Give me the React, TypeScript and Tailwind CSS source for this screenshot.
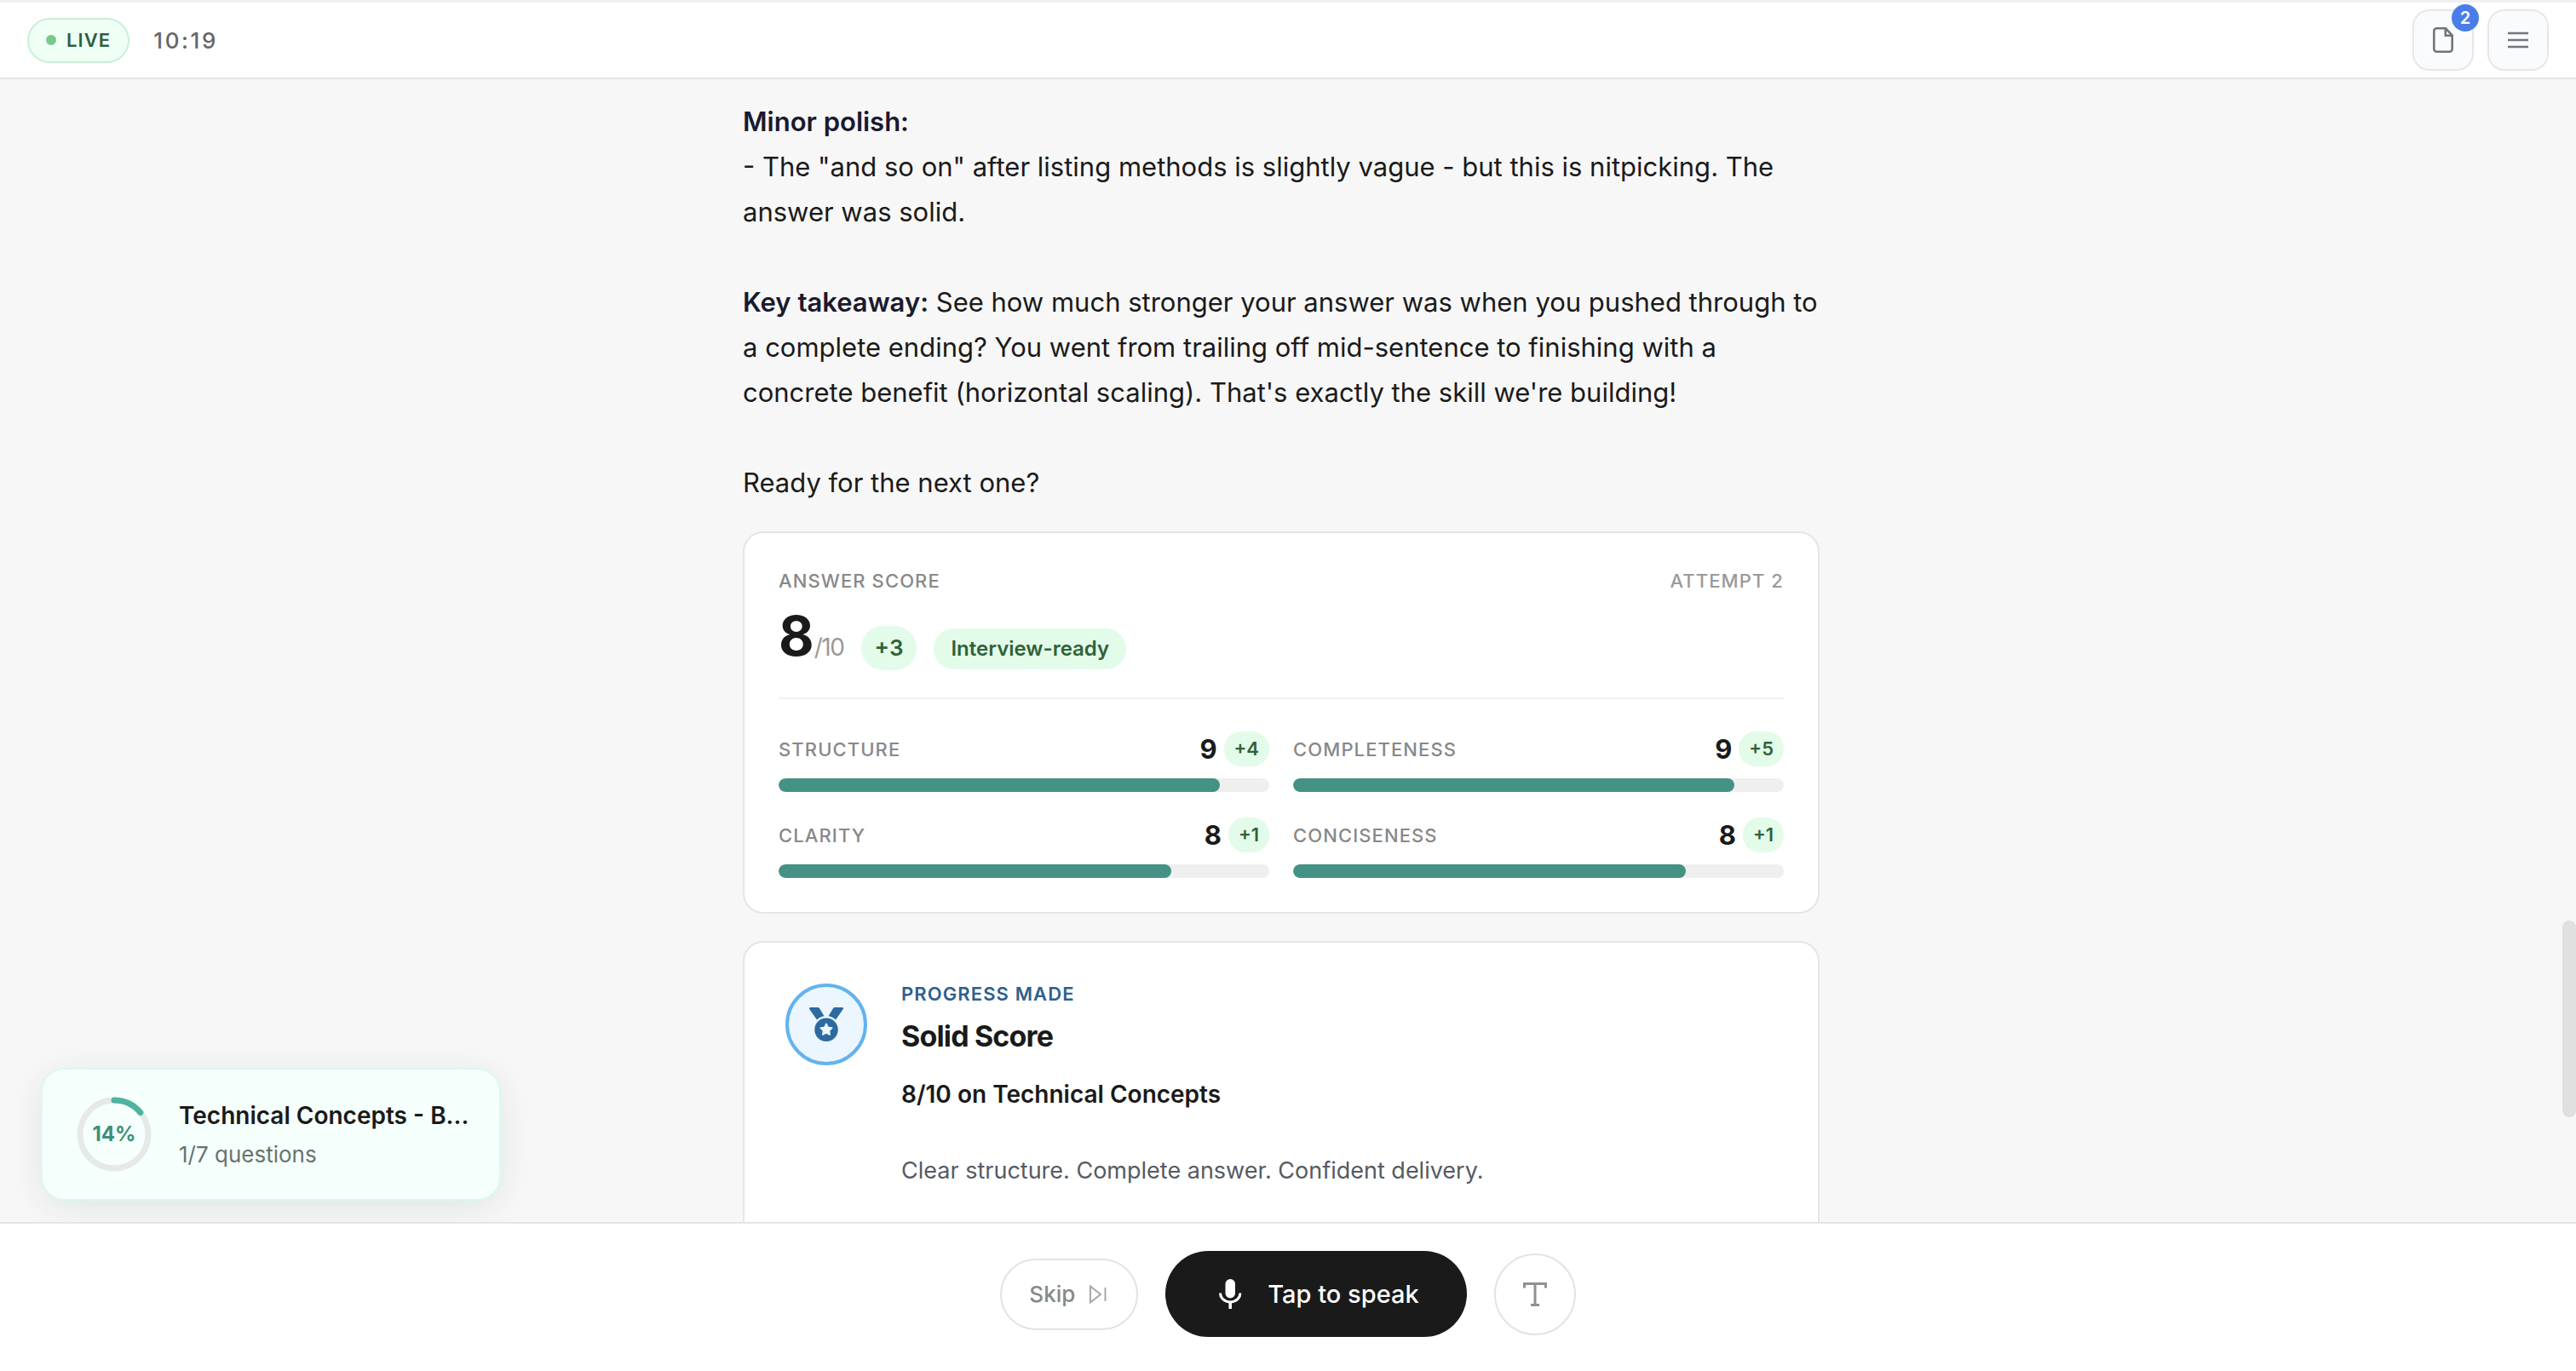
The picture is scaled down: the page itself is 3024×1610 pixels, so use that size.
import { FaMedal } from 'react-icons/fa';

interface Metric {
  label: string;
  score: number;
  delta: number;
}

const metrics: Metric[] = [
  { label: 'Structure', score: 9, delta: 4 },
  { label: 'Completeness', score: 9, delta: 5 },
  { label: 'Clarity', score: 8, delta: 1 },
  { label: 'Conciseness', score: 8, delta: 1 },
];

const FileIcon = () => (
  <svg width="24" height="30" viewBox="0 0 24 30" fill="none" stroke="currentColor" strokeWidth="2.6" aria-hidden="true">
    <path d="M4.500 1.300H15L22.700 9.500V25.500a3.200 3.200 0 0 1-3.200 3.200h-15a3.200 3.200 0 0 1-3.200-3.200v-21a3.200 3.200 0 0 1 3.200-3.200z" />
    <path d="M14.800 1.300v8.400h7.900" />
  </svg>
);

const MenuIcon = () => (
  <svg width="24" height="20" viewBox="0 0 24 20" stroke="currentColor" strokeWidth="2.6" aria-hidden="true">
    <path d="M0 2h24M0 10h24M0 18h24" />
  </svg>
);

const SkipIcon = () => (
  <svg width="24" height="24" viewBox="0 0 24 24" fill="none" stroke="#a8a8a8" strokeWidth="2" aria-hidden="true">
    <path d="M2 2.500 14 12 2 21.500z" />
    <path d="M19.500 4v16" />
  </svg>
);

const MicIcon = () => (
  <svg width="40" height="40" viewBox="0 0 40 40" fill="none" aria-hidden="true">
    <rect x="14.5" y="2" width="11.5" height="22.500" rx="5.750" fill="currentColor" />
    <path d="M8.500 18.500c0 5.800 5 10.500 11.700 10.500s11.700-4.700 11.700-10.500" stroke="currentColor" strokeWidth="3" />
    <path d="M20.200 29v8" stroke="currentColor" strokeWidth="3.500" />
  </svg>
);

const TextIcon = () => (
  <svg width="28" height="28" viewBox="0 0 28 28" fill="none" stroke="currentColor" strokeWidth="3" aria-hidden="true">
    <path d="M1.500 6.500v-5h25v5M14 1.500v25M9 26.500h10" />
  </svg>
);

const Header = () => (
  <header className="flex items-center justify-between border-t-[3px] border-b-2 border-t-[#f0f0f0] border-b-[#e5e5e5] bg-white px-8 py-2">
    <div className="flex items-center gap-7">
      <span className="flex items-center gap-3 rounded-full border-2 border-[#c6f0d6] bg-[#f0fff5] px-5 py-2 text-[22px] leading-[33px] font-semibold tracking-wider text-[#2b6040]">
        <span className="size-3 rounded-full bg-[#7bc88b]" />
        LIVE
      </span>
      <time className="text-[26px] leading-[39px] font-medium tracking-widest text-[#666666]">10:19</time>
    </div>
    <div className="flex gap-4 text-[#71757c]">
      <button type="button" aria-label="Documents" className="relative flex size-[72px] items-center justify-center rounded-[20px] border-2 border-[#e5e7eb] bg-[#fafbfd]">
        <FileIcon />
        <span className="absolute -top-2 -right-2 flex size-8 items-center justify-center rounded-full bg-[#4a7de9] text-[20px] leading-none font-semibold text-white">
          2
        </span>
      </button>
      <button type="button" aria-label="Menu" className="flex size-[72px] items-center justify-center rounded-[20px] border-2 border-[#e5e7eb] bg-[#fafbfd]">
        <MenuIcon />
      </button>
    </div>
  </header>
);

const Feedback = () => (
  <div className="text-[31px] leading-[53px] text-[#1a1a1a]">
    <p>
      <strong className="font-semibold text-[#1a1a2e]">Minor polish:</strong>
      <br />- The "and so on" after listing methods is slightly vague - but this is nitpicking. The answer was solid.
    </p>
    <p className="mt-[53px]">
      <strong className="font-semibold text-[#1a1a2e]">Key takeaway:</strong> See how much stronger your answer was when you
      pushed through to a complete ending? You went from trailing off mid-sentence to finishing with a concrete benefit
      (horizontal scaling). That's exactly the skill we're building!
    </p>
    <p className="mt-[53px]">Ready for the next one?</p>
  </div>
);

const MetricItem = ({ label, score, delta }: Metric) => (
  <div>
    <div className="flex h-[41px] items-center justify-between">
      <span className="text-[22px] leading-8 font-medium tracking-wider text-[#888888] uppercase">{label}</span>
      <span className="flex items-center gap-2">
        <span className="text-[31px] leading-8 font-bold text-[#1a1a1a]">{score}</span>
        <span className="rounded-[20px] bg-[#e3fbe9] px-3 text-[22px] leading-[41px] font-semibold text-[#2f6239]">+{delta}</span>
      </span>
    </div>
    <div className="mt-[14px] h-4 overflow-hidden rounded-lg bg-[#efefef]">
      <div className="h-full rounded-lg bg-[#439284]" style={{ width: `${score * 10}%` }} />
    </div>
  </div>
);

const ScoreCard = () => (
  <section className="mt-[31px] rounded-3xl border-2 border-[#e5e5e5] bg-white p-10">
    <div className="flex justify-between text-[22px] leading-8 font-medium tracking-wider uppercase">
      <h2 className="text-[#888888]">Answer score</h2>
      <span className="text-[#999999]">Attempt 2</span>
    </div>
    <div className="mt-[10px] flex items-baseline gap-5 border-b-2 border-[#f0f0f0] pb-8">
      <div className="flex items-baseline">
        <span className="text-[64px] leading-[77px] font-bold text-[#1a1a1a]">8</span>
        <span className="text-[28px] leading-[34px] tracking-tighter text-[#999999]">/10</span>
      </div>
      <span className="rounded-[26px] bg-[#e3fbe9] px-4 text-[26px] leading-[52px] font-semibold text-[#2f6239]">+3</span>
      <span className="rounded-3xl bg-[#e3fbe9] px-5 text-[24px] leading-[48px] font-semibold text-[#2f6239]">Interview-ready</span>
    </div>
    <div className="mt-[38px] grid grid-cols-2 gap-x-7 gap-y-[30px]">
      {metrics.map((metric) => (
        <MetricItem key={metric.label} {...metric} />
      ))}
    </div>
  </section>
);

const AchievementCard = () => (
  <section className="mt-8 flex gap-10 rounded-3xl border-2 border-[#e5e5e5] bg-white px-12 pt-12 pb-20">
    <div className="flex size-24 shrink-0 items-center justify-center rounded-full border-4 border-[#63b3ed] bg-[#ebf6ff] text-[#2c6aa0]">
      <FaMedal className="size-10" />
    </div>
    <div>
      <div className="text-[22px] leading-6 font-semibold tracking-wider text-[#2c6090] uppercase">Progress made</div>
      <h3 className="mt-4 text-[34px] leading-[44px] font-bold tracking-tight text-[#1a1a1a]">Solid Score</h3>
      <p className="mt-6 text-[28px] leading-[44px] font-semibold text-[#1a1a1a]">8/10 on Technical Concepts</p>
      <p className="mt-[46px] text-[27px] leading-[44px] text-[#555a63]">Clear structure. Complete answer. Confident delivery.</p>
    </div>
  </section>
);

const ProgressWidget = ({ done, total }: { done: number; total: number }) => {
  const percent = Math.round((done / total) * 100);

  return (
    <aside className="absolute bottom-[25px] left-12 flex w-[540px] items-center gap-8 rounded-[28px] border-2 border-[#d8fbec] bg-[#f5fffc] py-8 pr-8 pl-10 shadow-[0_8px_40px_rgba(0,40,30,0.09)]">
      <div className="relative flex size-[88px] shrink-0 items-center justify-center">
        <svg className="absolute inset-0 -rotate-90" viewBox="0 0 88 88" fill="none" strokeWidth="7" aria-hidden="true">
          <circle cx="44" cy="44" r="40" stroke="#e6e8e9" />
          <circle cx="44" cy="44" r="40" stroke="#4fb39d" strokeLinecap="round" pathLength="100" strokeDasharray={`${percent} 100`} />
        </svg>
        <span className="relative text-[24px] leading-8 font-bold text-[#3c8f78]">{percent}%</span>
      </div>
      <div>
        <div className="text-[28px] leading-[44px] font-semibold whitespace-nowrap text-[#1a1a1a]">Technical Concepts - B...</div>
        <div className="mt-1 text-[26px] leading-10 text-[#68736f]">{done}/{total} questions</div>
      </div>
    </aside>
  );
};

const Controls = () => (
  <footer className="flex items-center justify-center gap-8 border-t-2 border-[#e5e5e5] bg-white pt-8 pb-10">
    <button type="button" className="flex h-[84px] items-center gap-4 rounded-full border-2 border-[#e3e3e3] bg-white px-8 text-[26px] leading-10 font-medium text-[#888888]">
      Skip
      <SkipIcon />
    </button>
    <button type="button" className="flex h-[101px] items-center gap-6 rounded-full bg-[#1a1a1a] px-14 text-[29px] leading-10 font-medium text-white">
      <MicIcon />
      Tap to speak
    </button>
    <button type="button" aria-label="Type answer" className="flex size-24 items-center justify-center rounded-full border-2 border-[#e3e3e3] bg-white text-[#909090]">
      <TextIcon />
    </button>
  </footer>
);

export default function App() {
  return (
    <div className="flex h-screen flex-col bg-[#f7f7f7] font-['Inter','Liberation_Sans',sans-serif]">
      <Header />
      <main className="relative flex min-h-0 flex-1 overflow-hidden">
        <div className="min-w-0 flex-1">
          <div className="mx-auto max-w-[1264px] pt-[23px]">
            <Feedback />
            <ScoreCard />
            <AchievementCard />
          </div>
        </div>
        <div className="relative w-4 shrink-0">
          <div className="absolute top-[73.6%] h-[17.2%] w-full rounded-lg bg-[#e0e0e0]" />
        </div>
        <ProgressWidget done={1} total={7} />
      </main>
      <Controls />
    </div>
  );
}
